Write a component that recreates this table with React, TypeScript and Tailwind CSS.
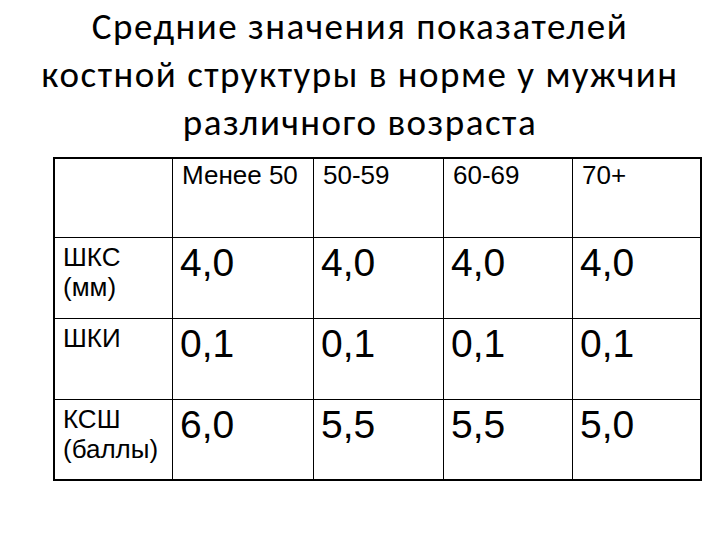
import React from "react";

const headers = ["Менее 50", "50-59", "60-69", "70+"];
const rows: { label: string[]; values: string[] }[] = [
  { label: ["ШКС", "(мм)"], values: ["4,0", "4,0", "4,0", "4,0"] },
  { label: ["ШКИ"], values: ["0,1", "0,1", "0,1", "0,1"] },
  { label: ["КСШ", "(баллы)"], values: ["6,0", "5,5", "5,5", "5,0"] },
];

export default function App() {
  return (
    <div className="w-[720px] h-[540px] bg-white overflow-hidden">
      <h1
        className="pt-[3px] text-center text-[37px] leading-[48px] tracking-[1.5px] text-black font-normal"
        style={{ fontFamily: "Carlito, 'Open Sans', sans-serif" }}
      >
        Средние значения показателей
        <br />
        костной структуры в норме у мужчин
        <br />
        различного возраста
      </h1>
      <div
        className="ml-[53px] mt-[10px] w-[649px] border-2 border-black grid grid-cols-[117px_141px_130px_129px_128px] grid-rows-[78px_81px_81px_80px] text-black"
        style={{ fontFamily: "'Liberation Sans', Arial, sans-serif" }}
      >
        <div></div>
        {headers.map((h) => (
          <div key={h} className="border-l border-black pl-[9px] pt-[1px] text-[26px] leading-[30px]">
            {h}
          </div>
        ))}
        {rows.map((r) => (
          <React.Fragment key={r.label[0]}>
            <div className="border-t border-black pl-[8px] pt-[4px] text-[26px] leading-[30px]">
              {r.label.map((l) => (
                <div key={l}>{l}</div>
              ))}
            </div>
            {r.values.map((v, i) => (
              <div key={i} className="border-t border-l border-black pl-[7px] pt-[2px] text-[39px] leading-[45px]">
                {v}
              </div>
            ))}
          </React.Fragment>
        ))}
      </div>
    </div>
  );
}
